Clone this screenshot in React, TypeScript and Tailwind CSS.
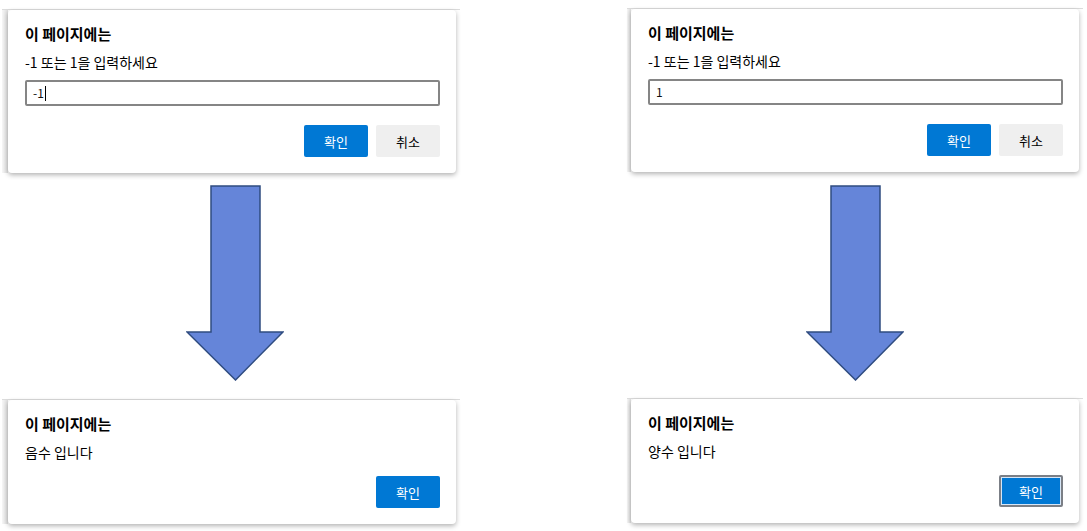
import React from "react";

type DialogProps = {
  band: string;
  children: React.ReactNode;
};

// screenshot crop: gray top edge, a shaded band on the left, dialog card with shadow
function Frame({ band, children }: DialogProps) {
  return (
    <div className="flex border-t border-[#dcdcdc]">
      <div className={`${band} bg-gradient-to-r from-[#f6f6f6] to-[#dedede] mb-[4px]`} />
      <div className="pb-[4px] pr-[4px]">{children}</div>
    </div>
  );
}

function Button({ label, primary, focused }: { label: string; primary?: boolean; focused?: boolean }) {
  if (focused) {
    return (
      <button className="w-[64px] h-[32px] rounded-[2px] border-2 border-[#7b7f86] bg-[#0078d4] text-white text-[13px] leading-none shadow-[inset_0_0_0_1px_#d6e6f7]">
        {label}
      </button>
    );
  }
  return (
    <button
      className={
        primary
          ? "w-[64px] h-[32px] rounded-[2px] bg-[#0078d4] text-white text-[13px] leading-none"
          : "w-[64px] h-[32px] rounded-[2px] bg-[#efefef] text-black text-[13px] leading-none"
      }
    >
      {label}
    </button>
  );
}

function PromptDialog({ value, caret }: { value: string; caret?: boolean }) {
  return (
    <div className="w-[448px] bg-white rounded-[4px] shadow-[0_2px_5px_rgba(0,0,0,0.3)] pl-[17px] pr-[16px] pt-[14px] pb-[16px]">
      <div className="text-[15px] font-bold leading-[20px] text-black">이 페이지에는</div>
      <div className="mt-[8px] text-[14px] leading-[20px] text-black">-1 또는 1을 입력하세요</div>
      <div className="mt-[8px] h-[26px] border-2 border-[#858585] rounded-[2px] pl-[6px] flex items-center text-[12px] text-[#111]">
        <span>{value}</span>
        {caret && <span className="ml-[1px] w-[1px] h-[15px] bg-black" />}
      </div>
      <div className="mt-[19px] flex justify-end gap-[8px]">
        <Button label="확인" primary />
        <Button label="취소" />
      </div>
    </div>
  );
}

function AlertDialog({ message, focused }: { message: string; focused?: boolean }) {
  return (
    <div className="w-[448px] bg-white rounded-[4px] shadow-[0_2px_5px_rgba(0,0,0,0.3)] pl-[17px] pr-[16px] pt-[14px] pb-[16px]">
      <div className="text-[15px] font-bold leading-[20px] text-black">이 페이지에는</div>
      <div className="mt-[8px] text-[14px] leading-[20px] text-black">{message}</div>
      <div className="mt-[14px] flex justify-end">
        <Button label="확인" primary focused={focused} />
      </div>
    </div>
  );
}

function DownArrow() {
  return (
    <svg width="98" height="196" viewBox="0 0 98 196">
      <polygon
        points="25,1 74,1 74,147 97,147 49.5,195 1,147 25,147"
        fill="#6585d9"
        stroke="#2f4c80"
        strokeWidth="1.5"
        strokeLinejoin="miter"
      />
    </svg>
  );
}

export default function App() {
  return (
    <div className="w-[1087px] h-[531px] bg-white overflow-hidden font-['Noto_Sans_CJK_KR',sans-serif] flex pl-[2px] gap-[167px]">
      {/* left: -1 entered */}
      <div className="w-[458px] pt-[9px] flex flex-col">
        <Frame band="w-[6px]">
          <PromptDialog value="-1" caret />
        </Frame>
        <div className="mt-[8px] ml-[184px]">
          <DownArrow />
        </div>
        <div className="mt-[18px]">
          <Frame band="w-[7px]">
            <AlertDialog message="음수 입니다" />
          </Frame>
        </div>
      </div>

      {/* right: 1 entered */}
      <div className="w-[456px] pt-[8px] flex flex-col">
        <Frame band="w-[4px]">
          <PromptDialog value="1" />
        </Frame>
        <div className="mt-[9px] ml-[179px]">
          <DownArrow />
        </div>
        <div className="mt-[17px]">
          <Frame band="w-[4px]">
            <AlertDialog message="양수 입니다" focused />
          </Frame>
        </div>
      </div>
    </div>
  );
}
